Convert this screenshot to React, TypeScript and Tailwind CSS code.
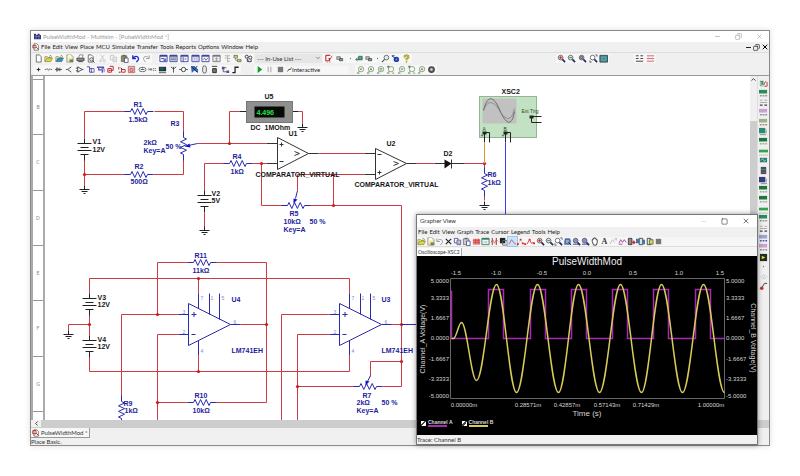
import React from 'react';
import { ChevronDown, ChevronLeft, ChevronUp, Copy, Minus, Square, X } from 'lucide-react';

type Draw = React.ReactNode;

const line = (d: string, color = '#333', width = 1) => (
  <path d={d} stroke={color} strokeWidth={width} fill="none" />
);
const fill = (d: string, color: string) => <path d={d} fill={color} />;

const panel = (frame: string, inner: Draw = null) => (
  <>
    <path d="M1 1.5h8v7H1z" fill="#f4f4fb" stroke={frame} />
    {fill('M1 1h8v2H1z', frame)}
    {inner}
  </>
);
const lens = (tint: string, inner: Draw = null) => (
  <>
    <circle cx="4" cy="4" r="2.6" fill={tint} stroke="#555" strokeWidth=".9" />
    {line('M6 6l3 3', '#23235f', 1.7)}
    {inner}
  </>
);
const probe = (inner: Draw = null) => (
  <>
    <circle cx="5.6" cy="4.6" r="3" fill="#f3f8ef" stroke="#7f9a76" strokeWidth=".9" />
    {line('M3.6 7L1.5 9M1 9h3', '#6d8a66', 0.9)}
    {inner}
  </>
);
const folder = (color: string) => (
  <>
    <path d="M1 8.5V3h3l1 1h3v1" fill="#fff3b0" stroke="#77702a" strokeWidth=".7" />
    <path d="M1 8.5l2-4h6.5l-2 4z" fill={color} stroke="#5a5a2a" strokeWidth=".5" />
    {line('M6 2.4q1.5-1.5 2.6.4', '#333', 0.7)}
  </>
);
const clipboard = (color: string) => (
  <>
    <path d="M1.5 2h6v6.5h-6z" fill={color} stroke="#555" strokeWidth=".7" />
    <path d="M5 4.5h4v5H5z" fill="#fff" stroke="#33337a" strokeWidth=".8" />
    {line('M3 1.5h3', '#555', 1.2)}
  </>
);
const pages = (color: string) => (
  <>
    <path d="M1.5 1.5h4v5h-4z" fill="#f4f4fa" stroke={color} strokeWidth=".8" />
    <path d="M4.5 3.5h4v5h-4z" fill="#f4f4fa" stroke={color} strokeWidth=".8" />
    {line('M5.5 5.5h2M5.5 7h2', color, 0.6)}
  </>
);
const sheet = (
  <path d="M2.5 1h3.5l2 2v6H2.5z" fill="#fff" stroke="#444" strokeWidth=".8" />
);
const meter = (color: string, detail: string) => (
  <>
    {fill('M0 1h9v4H0z', color)}
    {line('M1 7.5h2M4 7.5h2M7 7.5h2', detail, 1.4)}
  </>
);

const icons: Record<string, Draw> = {
  new: sheet,
  open: folder('#dcd83e'),
  sample: folder('#2b8ed8'),
  save: (
    <>
      <path d="M2 1h5l2 2v6H2z" fill="#f3f0ad" stroke="#777" strokeWidth=".7" />
      {fill('M3.5 1h3v2.5h-3z', '#fff')}
      {fill('M5 6h4v3H5z', '#7e7e5e')}
    </>
  ),
  print: (
    <>
      <path d="M3 4l1-3h4l-1 3" fill="#fff" stroke="#555" strokeWidth=".7" />
      <path d="M1 4.5h8v3H1z" fill="#8a8a8a" stroke="#3b3b3b" strokeWidth=".8" />
      {line('M2.5 8.5h5', '#3b3b3b', 1)}
    </>
  ),
  preview: (
    <>
      {sheet}
      <circle cx="6" cy="6" r="1.9" fill="#dce6e6" stroke="#444" strokeWidth=".8" />
      {line('M7.5 7.5l2 2', '#444', 1)}
    </>
  ),
  cut: (
    <>
      {line('M3 1l3.5 5M7 1L3.5 6', '#bbb', 0.8)}
      <circle cx="3" cy="7.5" r="1.2" fill="none" stroke="#bbb" strokeWidth=".8" />
      <circle cx="7" cy="7.5" r="1.2" fill="none" stroke="#bbb" strokeWidth=".8" />
    </>
  ),
  copyOff: pages('#bbb'),
  copy: pages('#33337a'),
  paste: clipboard('#8d8d4a'),
  pasteOff: clipboard('#c9c9c9'),
  undo: line('M2 1.5v3.5h3.5M2.5 4.5C5 1 9.5 3 8 6.5L6 9', '#1d2bd0', 1.5),
  undoOff: line('M2 1.5v3.5h3.5M2.5 4.5C5 1 9.5 3 8 6.5L6 9', '#999', 1),
  redoOff: line('M8 1.5v3.5H4.5M7.5 4.5C5 1 .5 3 2 6.5L4 9', '#999', 1),
  toolbox: panel('#3a4196', <>{line('M2.5 5h3', '#3a4196')}{fill('M5 5h3v3H5z', '#5574d0')}</>),
  spread: panel('#3e4a8e', line('M2 4.5h6M2 6.5h6', '#3e4a8e')),
  netlist: panel('#3f47a0', <>{line('M3.5 3.5v5', '#3f47a0')}{line('M5 5.5h2', '#c03030')}</>),
  grid: panel('#3f47a0', line('M2 4.5h6M2 6.5h6M4 3v5M6.5 3v5', '#9aa0d0', 0.6)),
  scope: panel('#3f47a0', line('M2 6.5l2-2 1.5 2.5L8 4', '#555', 0.8)),
  post: panel('#777', line('M3 5h4M3 7h4M5 3.5v5', '#999', 0.8)),
  tree: line('M2 2h6M5 2v7M5 5h3M5 8h3M2 4.5h2', '#aaa', 1),
  wizard: (
    <>
      {fill('M1 1h4v3H1zM5 6h4v3H5z', '#c9c858')}
      {line('M1 1.5h4v3H1zM5 6h4v2.5H5zM3 4.5V7h2', '#4a6652', 0.7)}
    </>
  ),
  database: (
    <>
      <circle cx="3" cy="3" r="1.7" fill="none" stroke="#333" strokeWidth="1" />
      <circle cx="7" cy="4" r="1.7" fill="none" stroke="#333" strokeWidth="1" />
      {line('M4 5v3.5h4V6', '#333', 1)}
      {fill('M3 6h2v2H3z', '#4658b8')}
    </>
  ),
  erc: (
    <>
      {line('M2 1.5h5M2 1.5v6h4v-3', '#c13b3b', 1.3)}
      {line('M5 5l1.5 1.5L9 2', '#8a2430', 0.8)}
      {line('M3 9h1M6 9h1', '#c13b3b', 1)}
    </>
  ),
  chip: (
    <>
      <path d="M2 3h4v3H2z" fill="#bfc6c4" stroke="#5d6865" strokeWidth=".8" />
      <path d="M5 5h3.5v2.5H5z" fill="#83a397" stroke="#38443f" strokeWidth=".8" />
    </>
  ),
  chipGreen: (
    <>
      <path d="M4 2.5h4v4H4z" fill="#5b9d82" stroke="#2d574c" strokeWidth=".8" />
      {line('M1 6h4M3 4L1 6l2 2', '#216a5e', 1)}
    </>
  ),
  dot: <circle cx="5" cy="5" r=".7" fill="#777" />,
  find: (
    <>
      <circle cx="6" cy="4" r="2.6" fill="#e3f0e9" stroke="#4a5b5b" strokeWidth=".9" />
      {line('M4 6L1 9', '#4a5b5b', 1.4)}
    </>
  ),
  edu: (
    <>
      <circle cx="6" cy="6" r="3" fill="#1f3fa8" />
      {line('M1 2l5 4M1 2h3', '#1a2a7a', 1)}
      {fill('M5 5h2v2H5z', '#4e9ad8')}
    </>
  ),
  help: (
    <>
      {line('M3 4V2.5Q5 .5 7 2.5V4L5 5.5V7', '#7b7b10', 2)}
      {line('M3 4V2.5Q5 .5 7 2.5V4L5 5.5V7', '#e8d531', 1)}
      <circle cx="5" cy="8.7" r="1" fill="#b39d1a" />
    </>
  ),
  zoomIn: lens('#f3caca', line('M2.5 4h3M4 2.5v3', '#c02020', 0.9)),
  zoomOut: lens('#d5ecdf', line('M2.5 4h3', '#27734f', 0.9)),
  zoomArea: lens('#b7b7cb', line('M3 3h2v2H3z', '#444', 0.7)),
  zoomFit: (
    <>
      {lens('#fff')}
      {line('M1 9.5V7M1 9h2M9 1v2M7 1h2', '#444', 0.8)}
    </>
  ),
  full: (
    <>
      <path d="M1 1.5h8.5v7.5H1z" fill="#3e8f8d" stroke="#345" strokeWidth="1" />
      {line('M3 3.5h4.5v3.5H3z', '#6fb3ae', 0.8)}
    </>
  ),
  rowsDark: line('M1 2h3M6 2h3M1 5h3M6 5h3M1 8h8', '#333', 1),
  rowsRed: (
    <>
      {line('M1 2h8M1 5h8M1 8h8', '#d35c6c', 1)}
      {line('M2.5 1v8M7 1v8', '#e9a6af', 0.6)}
    </>
  ),
  source: line('M3 5h4M5 3v4', '#333', 1.2),
  basic: line('M1 5h1.5l1-1 1.5 2 1.5-2 1 1H9', '#444', 0.8),
  diode: line('M1 5h8M3 3v4l3-2zM6.5 3v4', '#444', 0.9),
  transistor: line('M3 5l4-3M3 5l4 3M1 5h2', '#333', 0.9),
  analog: line('M3 2v6l5-3zM1 3.5h2M1 6.5h2M8 5h1.5', '#333', 0.9),
  ttl: (
    <>
      {line('M1 2h3v2h3M4 4v4h3', '#4044a0', 1)}
      {line('M6 4h3v4H6z', '#4044a0', 0.8)}
    </>
  ),
  cmos: (
    <>
      {line('M1 2.5h8M3 2.5v3h4v3', '#5a50b8', 1.4)}
      {line('M6 4h3v4', '#4044a0', 0.8)}
    </>
  ),
  misc: (
    <>
      {line('M2 8V4h4v4zM6 6h2V1.5H4', '#c62b35', 1.1)}
      {line('M3 6h2', '#c62b35', 1.4)}
    </>
  ),
  mixed: (
    <>
      {line('M2 2v3M5 4v4h4V5H5', '#c33', 1.1)}
      {line('M2 8h2M4 3l2 2', '#333', 1.1)}
    </>
  ),
  display: (
    <>
      <path d="M1.5 1.5h7v7h-7z" fill="#e9b8b8" stroke="#a25656" strokeWidth=".8" />
      {line('M3.5 4h3v3h-3z', '#b33', 0.7)}
    </>
  ),
  power: (
    <>
      <ellipse cx="5" cy="5" rx="4" ry="2.5" fill="none" stroke="#555" strokeWidth=".9" />
      {line('M3 5h4M5 3v1', '#555', 1)}
    </>
  ),
  miscText: line('M1 6V4l1 1 1-1v2M4 4v2M5.5 4H7M5.5 6H7M8 4h1M8 6h1', '#555', 0.9),
  peripheral: (
    <>
      {fill('M1 2h8v5H1z', '#1a3a3c')}
      {line('M1 8.5h8', '#555', 1)}
      {fill('M2 3h5v2H2z', '#246060')}
    </>
  ),
  rf: line('M2 2l3 2.5L8 2M5 2v6.5', '#333', 0.9),
  motor: (
    <>
      {line('M0 5h10', '#444', 0.9)}
      <circle cx="5" cy="5" r="2.4" fill="#fff" stroke="#333" strokeWidth="1" />
    </>
  ),
  ni: (
    <>
      {fill('M1 1h4l4 4v4L5 6 2 9z', '#3867b6')}
      {line('M2 2l6 6M8 1L5 5', '#192a67', 1)}
    </>
  ),
  connector: (
    <rect x="3" y="1" width="4" height="8" rx="2" fill="#eee" stroke="#555" strokeWidth="1" />
  ),
  mcu: (
    <>
      {line('M2 1.5h6', '#333', 1)}
      <path d="M3 4h4v4.5H3z" fill="#777" stroke="#222" strokeWidth="1" />
    </>
  ),
  hierarchy: (
    <>
      {fill('M1 2h3v3H1zM6 6h3v3H6z', '#4a50a8')}
      {line('M2.5 5v2.5H6M4 3h2', '#333', 0.8)}
    </>
  ),
  bus: line('M1.5 8.5h3v-6h4', '#222', 1.4),
  play: fill('M3 1l5 4-5 4z', '#0d9a22'),
  pause: line('M3.5 2v6M6.5 2v6', '#aaa', 1.2),
  stop: fill('M2 2h6v6H2z', '#777'),
  probeV: probe(line('M4.5 3.5l1 2 1-2', '#4e7d45', 0.8)),
  probeA: probe(line('M4.5 6l1-2.5 1 2.5', '#4e7d45', 0.8)),
  probeW: probe(line('M4 4h3M4 5.5h3', '#4e7d45', 0.8)),
  probePair: (
    <>
      {probe()}
      {line('M1 2h3M2.5 .5v3M7 9h2', '#3f7d3a', 0.9)}
    </>
  ),
  gear: (
    <>
      <circle cx="5" cy="5" r="3" fill="#777" stroke="#444" strokeWidth="1.5" />
      {fill('M4 4h2v2H4z', '#f0f0f0')}
    </>
  ),
  cross: line('M2 2l6 6M8 2L2 8', '#222', 1.3),
  redGrid: (
    <>
      {fill('M1 2h8v6.5H1z', '#e7817f')}
      {line('M1 4h8M1 6h8M4 2v6M7 2v6', '#c9423f', 0.7)}
    </>
  ),
  legend: panel('#397b68', fill('M3 4.5h4v2.5H3z', '#b9d9cf')),
  cursors: (
    <>
      {line('M2.5 1v8M7 1v8', '#a93a2f', 1.1)}
      {line('M1 6l2-3 2 4 2-4 2 2', '#b55', 0.8)}
    </>
  ),
  black: (
    <>
      {fill('M1 1h6v6H1z', '#222')}
      {line('M4 4h5v5H4z', '#666', 1)}
    </>
  ),
  waveA: line('M1 8l3-5 3 4 2 1', '#c55779', 1),
  waveB: (
    <>
      {line('M1 8l3-5 2 4 3 1', '#e5a3a3', 0.6)}
      {fill('M0 7h2v2H0zM3 2h2v2H3zM5.5 6h2v2h-2zM8 7h2v2H8z', '#d22')}
    </>
  ),
  waveC: (
    <>
      {line('M1 8l3-5 2 4 3-1', '#d33', 1)}
      {fill('M3 2h2v2H3zM8 6h2v2H8z', '#d22')}
    </>
  ),
  zoomX: (
    <>
      {fill('M2 1h6v2h1v6H1V4h1z', '#8dadc0')}
      {line('M2.5 2.5h5v5h-5z', '#3d4f9d', 1)}
      {line('M6 6l3 3', '#222', 1)}
    </>
  ),
  zoomY: (
    <>
      {lens('#8791d0')}
      {line('M1 8h8', '#343a7c', 1)}
    </>
  ),
  hand: (
    <path
      d="M2.5 5V3h1V1.5h1.2V1h1.2v1H7v1h1v3.5L7 9H4z"
      fill="#fff"
      stroke="#222"
      strokeWidth=".9"
    />
  ),
  annotOff: line('M1 8l3-5 2 3M6 2h3M8 1v3', '#bbb', 1),
  overlay: line('M1 7l2-4 2 3 2-3 2 3M1 8h4', '#a34aa3', 1),
  exportRed: (
    <>
      <path d="M1.5 1.5h4v7h-4z" fill="#8b8b8b" stroke="#333" strokeWidth=".9" />
      {line('M5 6h4M7 4l2 2-2 2', '#d02a2a', 1.2)}
    </>
  ),
  exportBlue: (
    <>
      <path d="M3.5 1.5h4v7h-4z" fill="#d9e4ef" stroke="#333" strokeWidth=".9" />
      {fill('M0 2h4v5H0zM7 3h3v5H7z', '#45779d')}
    </>
  ),
  exportGreen: (
    <>
      <path d="M2.5 1.5h4v7h-4z" fill="#d9e4ef" stroke="#333" strokeWidth=".9" />
      {fill('M5 3h4v5H5z', '#d8d840')}
      {line('M5 3h4v5H5z', '#555', 0.8)}
    </>
  ),
  multimeter: (
    <>
      {fill('M1 2h4v6H1z', '#4e9070')}
      {line('M2 3v4h3', '#fff', 0.7)}
      {line('M5.5 6.5Q7 1 9 4v4H6', '#b33838', 1)}
    </>
  ),
  funcGen: meter('#2c8c56', '#8a9a90'),
  watt: (
    <>
      {line('M1 2.5h3M6 2.5h3M1 5h8', '#9a8d8d', 0.8)}
      {line('M1 8h3M6 8h3', '#444', 1.4)}
    </>
  ),
  violet: meter('#c9a3cf', '#9c80a8'),
  olive: meter('#9bb286', '#b08a66'),
  teal: (
    <>
      {fill('M0 1h7v6H0z', '#2a8b72')}
      {line('M8 3v4M1 8.5h7', '#7a8f88', 1)}
    </>
  ),
  green: meter('#22753a', '#8fb59a'),
  lime: (
    <>
      {fill('M0 3h10v3H0z', '#36a24c')}
      {line('M0 9h10', '#aaa', 0.7)}
    </>
  ),
  scopeTeal: (
    <>
      {fill('M1 2h8v5H1z', '#2b7d6b')}
      {line('M2 5l2-2 2 3 2-2', '#cfe', 0.7)}
    </>
  ),
  bode: (
    <>
      {fill('M2 1h6v8H2z', '#424f66')}
      {line('M2 4h6', '#3aa06e', 1)}
      {line('M2 7h6', '#b64a56', 1)}
    </>
  ),
  navy: (
    <>
      {fill('M0 1h7v6H0z', '#353d7a')}
      {line('M2 8.5h7M8 3v4', '#7b80a8', 1)}
    </>
  ),
  blueText: meter('#9aa3cf', '#5158b0'),
  labview: (
    <>
      {fill('M1 1h8v8H1z', '#20301c')}
      {fill('M3 3l4 2-4 2z', '#d7d33a')}
    </>
  ),
  clipOff: line('M2 6l3-3q2 0 1 2L4 7q3 2 5-3', '#c8c8c8', 1),
  clamp: (
    <>
      {line('M9 1.5H6L3.5 6', '#333', 1)}
      <circle cx="3" cy="7" r="2" fill="#c23a2a" />
    </>
  ),
};

const ToolButton: React.FC<{ name: string; active?: boolean }> = ({ name, active }) => (
  <button
    type="button"
    aria-label={name}
    className={active ? 'bg-[#cce4f7] outline-1 outline-[#9cc8ec]' : 'hover:bg-[#dcebf8]'}
  >
    <svg viewBox="0 0 10 10" className="block size-[9px]">
      {icons[name]}
    </svg>
  </button>
);

const Tools: React.FC<{ names: string[]; className: string }> = ({ names, className }) => (
  <div className={`flex shrink-0 items-center justify-around bg-[#f7f7f7] ${className}`}>
    {names.map((name, i) => (
      <ToolButton key={name + i} name={name} />
    ))}
  </div>
);

const MenuBar: React.FC<{ items: string[] }> = ({ items }) => (
  <nav className="flex items-center gap-[2px]">
    {items.map((item) => (
      <button key={item} type="button" className="text-[#222]">
        {item}
      </button>
    ))}
  </nav>
);

/* ---------- schematic ---------- */

const BLUE = '#2a2aae';

const Resistor: React.FC<{ x: number; y: number; vertical?: boolean }> = ({ x, y, vertical }) => (
  <path
    d="M-6 0H0l1.5-3 2.8 6 2.8-6 2.8 6 2.8-6 2.8 6L17 0h6"
    transform={`translate(${x} ${y})${vertical ? ' rotate(90)' : ''}`}
    fill="none"
    stroke={BLUE}
  />
);

const Battery: React.FC<{ x: number; y: number }> = ({ x, y }) => (
  <path
    d="M0-5V0M-7 0H7M-4 4H4M-7 7H7M-4 11H4M0 11v6"
    transform={`translate(${x} ${y})`}
    stroke="#222"
    fill="none"
  />
);

const Ground: React.FC<{ x: number; y: number }> = ({ x, y }) => (
  <path
    d="M0-4V0M-5 0H5M-3 2H3M-1 4H1"
    transform={`translate(${x} ${y})`}
    stroke="#222"
    fill="none"
  />
);

const OpAmp: React.FC<{ x: number; y: number }> = ({ x, y }) => (
  <g transform={`translate(${x} ${y})`} stroke={BLUE} fill="none">
    <path d="M0-21V21L42 0zM-10-10H0M-10 10H0M10-31V-16M21-31V-10M31-31V-5M10 16V31M42 0H52" />
    <path d="M3-10H8M5.5-12.5V-7.5M3 10H7" />
    <g fill="#8585c8" stroke="none" className="text-[5px]">
      <text x="-6" y="-11">3</text>
      <text x="-6" y="9">2</text>
      <text x="12" y="-25">7</text>
      <text x="22" y="-25">1</text>
      <text x="33" y="-25">5</text>
      <text x="12" y="28">4</text>
      <text x="45" y="-1">6</text>
    </g>
  </g>
);

const wires = [
  'M84 138V111H125M154 111H183V132M183 159V174H153M125 174H84M84 158V185',
  'M197 143H266M229 143V111H239M298 111H302V123',
  'M204 190V163H224M252 163H266M261 163V205H282M309 205H401V386H382',
  'M333 205V174M297 190V174H364M318 153H364',
  'M416 163H434M464 163H484V168M484 195V200',
  'M89 293V278H349V293M89 325V335M89 357V371H349V355M198 278V293M198 355V371',
  'M68 330V324H89M89 314V325M157 314V262H187M215 262H266V402H215M187 402H157',
  'M178 314H121V396M178 334H157V420M240 324H266',
  'M329 314H281V420M329 334H297V420M297 386H354M390 324H401M401 361H370V376',
];

const joints = [
  [84, 174], [229, 143], [261, 163], [333, 205], [484, 163], [89, 324], [198, 278], [198, 371],
  [157, 314], [157, 402], [266, 324], [297, 386], [401, 324], [401, 361],
];

const blueLabels: [number, number, string][] = [
  [133, 106, 'R1'], [128, 121, '1.5kΩ'], [170, 125, 'R3'], [143, 144, '2kΩ'],
  [143, 152, 'Key=A'], [165, 148, '50 %'], [134, 168, 'R2'], [130, 183, '500Ω'],
  [232, 158, 'R4'], [230, 173, '1kΩ'], [289, 215, 'R5'], [283, 223, '10kΩ'],
  [309, 223, '50 %'], [283, 231, 'Key=A'], [487, 176, 'R6'], [487, 184, '1kΩ'],
  [194, 257, 'R11'], [192, 272, '11kΩ'], [231, 301, 'U4'], [231, 352, 'LM741EH'],
  [194, 397, 'R10'], [192, 412, '10kΩ'], [123, 405, 'R9'], [124, 412, '1kΩ'],
  [381, 301, 'U3'], [381, 352, 'LM741EH'], [362, 397, 'R7'], [356, 404, '2kΩ'],
  [381, 404, '50 %'], [356, 412, 'Key=A'],
];

const blackLabels: [number, number, string][] = [
  [92, 143, 'V1'], [92, 151, '12V'], [211, 195, 'V2'], [211, 202, '5V'], [264, 98, 'U5'],
  [250, 129, 'DC\u00a0 1MOhm'], [288, 135, 'U1'], [255, 176, 'COMPARATOR_VIRTUAL'],
  [386, 145, 'U2'], [354, 186, 'COMPARATOR_VIRTUAL'], [443, 155, 'D2'], [501, 93, 'XSC2'],
  [97, 299, 'V3'], [97, 306, '12V'], [97, 341, 'V4'], [97, 348, '12V'],
];

const Schematic: React.FC = () => (
  <svg
    viewBox="45 76 705 344"
    width="705"
    height="344"
    className="block max-w-none font-['Liberation_Sans',sans-serif]"
  >
    <g transform="translate(.5 .5)">
      <path d={wires.join('')} fill="none" stroke="#cc3a42" />
      {joints.map(([x, y]) => (
        <circle key={`${x}-${y}`} cx={x} cy={y} r="1.6" fill="#d01820" />
      ))}

      <Resistor x={130} y={111} />
      <Resistor x={130} y={174} />
      <Resistor x={183} y={137} vertical />
      <Resistor x={229} y={163} />
      <Resistor x={287} y={205} />
      <Resistor x={484} y={173} vertical />
      <Resistor x={193} y={262} />
      <Resistor x={193} y={402} />
      <Resistor x={121} y={401} vertical />
      <Resistor x={359} y={386} />

      <Battery x={84} y={143} />
      <Battery x={204} y={195} />
      <Battery x={89} y={298} />
      <Battery x={89} y={340} />
      <path d="M204 212V230" stroke="#cc3a42" />
      <Ground x={84} y={189} />
      <Ground x={204} y={230} />
      <Ground x={302} y={127} />
      <Ground x={484} y={205} />
      <Ground x={68} y={334} />

      {/* potentiometer wipers */}
      <path d="M197 143L188 145M297 190L295 198M370 375L367 381M401 324H416" stroke={BLUE} fill="none" />
      <path d="M184 146l5-3 1 4zM293 203v-5l4 1zM365 385v-5l4 1z" fill="#1414c8" />

      {/* comparators */}
      <g fill="none" stroke="#333">
        <path d="M277 137V169L308 153zM266 143H277M266 163H277M308 153H318" />
        <path d="M375 148V179L406 163zM364 153H375M364 174H375M406 163H416" />
        <path d="M279 144h4M281 142v4M279 161h4M377 154h4M377 172h4M379 170v4" />
        <path d="M294 151l5 2-5 2M393 161l5 2-5 2" />
        <path d="M434 163H464M451 159V168" />
      </g>
      <path d="M444 159V168L451 163z" fill="#111" />

      <OpAmp x={188} y={324} />
      <OpAmp x={339} y={324} />

      {/* voltmeter readout */}
      <path d="M239 111H246M292 111H298" stroke="#222" />
      <rect x="246" y="101" width="46" height="21" fill="#8f8f8f" stroke="#777" />
      <rect x="254" y="106" width="30" height="11" fill="#050a05" />
      <text x="256" y="114" fill="#2fe04a" className="text-[7px] font-bold">4.496</text>

      {/* oscilloscope */}
      <rect x="479" y="96" width="57" height="41" fill="#c3e2c3" stroke="#95b595" />
      <rect x="482" y="98" width="34" height="25" fill="#c1c1c1" />
      <path d="M483 110C487 94 493 95 499 109S511 128 514 111" fill="none" stroke="#555" strokeWidth=".8" />
      <path d="M483 110C487 99 493 100 499 110S511 122 514 108" fill="none" stroke="#777" strokeWidth=".7" />
      <path d="M484 132V142M484 132H489V142M505 132V142M505 132H510V142M531 116H541M531 116V122H541" fill="none" stroke="#222" />
      <path d="M482 131h4v3h-4zM503 131h4v3h-4zM529 115h4v3h-4z" fill="#222" />
      <g fill="#244a2a" className="text-[5px]">
        <text x="482" y="130">A</text>
        <text x="503" y="130">B</text>
        <text x="521" y="112">Ext Trig</text>
        <text x="480" y="136">+</text>
        <text x="501" y="136">+</text>
      </g>
      <path d="M484 142V163" stroke="#e0962e" />
      <path d="M505 142V230" stroke="#3c3cf0" />

      <g fill="#1d1d9c" className="text-[7px] font-bold">
        {blueLabels.map(([x, y, label]) => (
          <text key={`${x}-${y}`} x={x} y={y}>{label}</text>
        ))}
      </g>
      <g fill="#161616" className="text-[7px] font-bold">
        {blackLabels.map(([x, y, label]) => (
          <text key={`${x}-${y}`} x={x} y={y}>{label}</text>
        ))}
      </g>
    </g>
  </svg>
);

/* ---------- oscilloscope graph ---------- */

const extrema: [number, number][] = [
  [451, 338], [453, 338], [461, 322], [476, 380], [496, 284], [516, 392], [537, 284], [558, 392],
  [578, 284], [599, 392], [620, 284], [641, 392], [661, 284], [682, 392], [703, 284], [724, 392],
];

const sinePath = extrema
  .map(([x, y], i) => {
    if (i === 0) return `M${x} ${y}`;
    const [px, py] = extrema[i - 1];
    const k = (x - px) * 0.364;
    return `C${px + k} ${py} ${x - k} ${y} ${x} ${y}`;
  })
  .join('');

const pulsePath =
  'M451 290V338' +
  [488, 530, 571, 612, 653, 695].map((x) => `H${x}V289H${x + 15}V338`).join('') +
  'H724';

const yTicks: [string, number][] = [
  ['5.0000', 283], ['3.3333', 300], ['1.6667', 320], ['0.0000', 340], ['-1.6667', 361],
  ['-3.3333', 381], ['-5.0000', 398],
];
const topTicks: [string, number][] = [
  ['-1.5', 456], ['-1.0', 496], ['-0.5', 542], ['0.0', 587], ['0.5', 633], ['1.0', 679],
  ['1.5', 720],
];
const bottomTicks: [string, number][] = [
  ['0.00000m', 464], ['0.28571m', 528], ['0.42857m', 567], ['0.57143m', 607],
  ['0.71429m', 646], ['1.00000m', 711],
];

const Graph: React.FC = () => (
  <svg
    viewBox="417 256 340 162"
    className="block w-full fill-[#d4d4d4] font-['Liberation_Sans',sans-serif] text-[6px]"
  >
    <text x="587" y="265" textAnchor="middle" className="fill-[#eee] text-[10px]">PulseWidthMod</text>
    {topTicks.map(([label, x]) => (
      <text key={label} x={x} y="275" textAnchor="middle">{label}</text>
    ))}
    {bottomTicks.map(([label, x]) => (
      <text key={label} x={x} y="407" textAnchor="middle">{label}</text>
    ))}
    {yTicks.map(([label, y]) => (
      <React.Fragment key={label}>
        <text x="449" y={y} textAnchor="end">{label}</text>
        <text x="726" y={y}>{label}</text>
      </React.Fragment>
    ))}
    <text x="587" y="416" textAnchor="middle" className="text-[8px]">Time (s)</text>
    <text transform="translate(425 339) rotate(-90)" textAnchor="middle" className="text-[7px]">
      Channel_A Voltage(V)
    </text>
    <text transform="translate(751 338) rotate(90)" textAnchor="middle" className="text-[7px]">
      Channel_B Voltage(V)
    </text>
    <g fill="none" transform="translate(.5 .5)">
      <path d="M450 278H724V398H450z" stroke="#666" />
      <path d={pulsePath} stroke="#a62ab6" strokeWidth="1.5" />
      <path d={sinePath} stroke="#d8cc58" strokeWidth="1.5" />
    </g>
  </svg>
);

const LegendEntry: React.FC<{ id: string; label: string; bar: string }> = ({ id, label, bar }) => (
  <div className="flex items-center gap-[2px]">
    <input
      id={id}
      type="checkbox"
      defaultChecked
      className="size-[5px] appearance-none bg-white checked:bg-[linear-gradient(135deg,#fff_35%,#444_35%,#444_60%,#fff_60%)]"
    />
    <label htmlFor={id} className="text-[5px] leading-[5px] font-bold text-[#ddd]">
      {label}
      <span className={`block h-[2px] w-[19px] ${bar}`} />
    </label>
  </div>
);

const graphTools = [
  'open', 'save', 'undoOff', 'cross', 'copy', 'pasteOff', '|', 'redGrid', 'legend', 'cursors',
  'black', 'waveA', 'waveB', 'waveC', '|', 'zoomIn', 'zoomOut', 'zoomFit', 'zoomX', 'zoomY',
  'zoomY', 'hand', '|',
];

const GrapherWindow: React.FC = () => (
  <section className="absolute right-[11px] bottom-0 w-[342px] border border-[#777] bg-[#f0f0f0] shadow-[0_0_5px_#0006]">
    <header className="flex h-[12px] items-center justify-between bg-white pr-[7px] pl-[3px]">
      <h2>Grapher View</h2>
      <div className="flex gap-[14px]">
        <button type="button" aria-label="Minimize"><Minus className="size-[7px] text-[#ccc]" /></button>
        <button type="button" aria-label="Maximize"><Square className="size-[7px]" /></button>
        <button type="button" aria-label="Close"><X className="size-[8px]" /></button>
      </div>
    </header>
    <div className="flex h-[10px] items-center pl-px">
      <MenuBar
        items={['File', 'Edit', 'View', 'Graph', 'Trace', 'Cursor', 'Legend', 'Tools', 'Help']}
      />
    </div>
    <div className="flex h-[10px] items-center border-b border-[#ddd] bg-[#f6f6f6]">
      {graphTools.map((name, i) =>
        name === '|' ? (
          <span key={i} className="w-px" />
        ) : (
          <ToolButton key={i} name={name} active={name === 'waveA'} />
        ),
      )}
      <button type="button" className="w-[9px] font-['Liberation_Serif',serif] text-[8px] font-bold">A</button>
      {['annotOff', 'overlay', 'exportRed', 'exportBlue', 'exportGreen', 'stop'].map((name) => (
        <ToolButton key={name} name={name} />
      ))}
    </div>
    <div className="flex h-[9px] items-end bg-[#f4f4f4]">
      <button type="button" className="h-[8px] border-r border-[#aaa] bg-white px-px text-[5px] leading-[8px]">
        Oscilloscope-XSC2
      </button>
    </div>
    <div className="bg-black pb-[8px] font-['Liberation_Sans',sans-serif]">
      <Graph />
      <div className="flex gap-[9px] pt-[2px] pl-[4px]">
        <LegendEntry id="ch-a" label="Channel A" bar="bg-[#a62ab6]" />
        <LegendEntry id="ch-b" label="Channel B" bar="bg-[#d8cc58]" />
      </div>
    </div>
    <footer className="flex h-[9px] items-center">Trace: Channel B</footer>
  </section>
);

/* ---------- main window ---------- */

const instruments = [
  'multimeter', 'funcGen', 'watt', 'violet', 'olive', 'teal', 'green', 'lime', 'scopeTeal', 'bode',
  'navy', 'green', 'green', 'lime', 'funcGen', 'watt', 'blueText', 'violet', 'labview', 'dot',
  'clipOff', 'clamp',
];

const App: React.FC = () => {
  return (
    <div className="min-h-screen bg-white p-[30px] font-[Lato,sans-serif] text-[6px] leading-[8px] text-[#333]">
      <main className="relative border border-[#8a8a8a] bg-[#f0f0f0] shadow-[0_0_6px_#0002]">
        <header className="flex h-[11px] items-center bg-white pr-[6px] pl-[3px] text-[#999]">
          <svg viewBox="0 0 10 10" className="mr-[2px] size-[7px]">
            {fill('M0 1h3v2h2V1h3v2h2v6H0z', '#34347c')}
            {line('M1 5h8M3 3v6M7 3v6', '#8d8dd0', 0.8)}
          </svg>
          <h1 className="flex-1">PulseWidthMod - Multisim - [PulseWidthMod *]</h1>
          <div className="flex gap-[14px]">
            <button type="button" aria-label="Minimize"><Minus className="size-[7px]" /></button>
            <button type="button" aria-label="Restore"><Copy className="size-[7px] -scale-x-100" /></button>
            <button type="button" aria-label="Close"><X className="size-[7px]" /></button>
          </div>
        </header>

        <div className="flex h-[11px] items-center border-b border-[#dedede] pl-px">
          <svg viewBox="0 0 10 10" className="mr-px size-[8px]">
            {sheet}
            {line('M1 3h4v3H1zM5 5l3 3', '#a03030', 1)}
          </svg>
          <MenuBar
            items={[
              'File', 'Edit', 'View', 'Place', 'MCU', 'Simulate', 'Transfer', 'Tools', 'Reports',
              'Options', 'Window', 'Help',
            ]}
          />
          <div className="ml-auto flex gap-px text-black">
            <button type="button" aria-label="Minimize document"><Minus className="size-[7px]" strokeWidth={3} /></button>
            <button type="button" aria-label="Restore document"><Copy className="size-[7px] -scale-x-100" /></button>
            <button type="button" aria-label="Close document"><X className="size-[8px]" strokeWidth={3} /></button>
          </div>
        </div>

        <div className="flex h-[11px] items-center gap-px pl-[2px]">
          <Tools names={['new', 'open', 'sample', 'save', 'print', 'preview']} className="w-[63px]" />
          <Tools names={['cut', 'copyOff', 'paste', 'undo', 'redoOff']} className="w-[55px]" />
          <Tools
            names={['toolbox', 'spread', 'netlist', 'grid', 'scope', 'post', 'tree', 'wizard', 'database']}
            className="ml-[5px] w-[96px]"
          />
          <div className="relative">
            <select
              aria-label="In-use list"
              className="block h-[9px] w-[67px] appearance-none bg-[#e6e6e6] pl-[2px] text-[6px] leading-[9px]"
            >
              <option>--- In-Use List ---</option>
            </select>
            <ChevronDown className="pointer-events-none absolute top-px right-px size-[6px]" />
          </div>
          <Tools names={['erc', 'chip']} className="w-[22px]" />
          <Tools names={['dot', 'chipGreen', 'chip', 'dot']} className="w-[33px]" />
          <Tools names={['find', 'edu', 'help']} className="w-[32px]" />
          <Tools
            names={['zoomIn', 'zoomOut', 'zoomArea', 'zoomFit', 'full']}
            className="ml-[143px] w-[53px]"
          />
          <Tools names={['rowsDark', 'rowsRed']} className="ml-[24px] w-[22px]" />
        </div>

        <div className="flex h-[11px] items-center gap-px pl-[2px]">
          <Tools
            names={[
              'source', 'basic', 'diode', 'transistor', 'analog', 'ttl', 'cmos', 'misc', 'mixed',
              'display', 'power', 'miscText', 'peripheral', 'rf', 'motor', 'ni', 'connector', 'mcu',
              'hierarchy', 'bus',
            ]}
            className="w-[208px]"
          />
          <Tools names={['play', 'pause', 'stop']} className="ml-[12px] w-[32px]" />
          <button type="button" className="flex w-[62px] items-center bg-[#f7f7f7] text-[#222]">
            <svg viewBox="0 0 10 10" className="size-[5px]">{line('M1 9l3-5 2 2 3-5', '#333', 1.5)}</svg>
            Interactive
          </button>
          <Tools
            names={['probeV', 'probeA', 'probeW', 'probePair', 'probeV', 'probePair', 'probeA', 'gear']}
            className="ml-[5px] w-[82px]"
          />
        </div>

        <div className="flex border-t border-[#999]">
          <div className="w-[14px] shrink-0 border-x-2 border-[#aaa] bg-white pt-[3px]">
            <div className="grid h-[332px] grid-rows-6 text-center text-[5px] text-[#888]">
              {['B', 'C', 'D', 'E', 'F', 'G'].map((letter) => (
                <span key={letter} className="flex items-center justify-center border-t border-[#999]">
                  {letter}
                </span>
              ))}
            </div>
            <div className="border-t border-[#999]" />
          </div>
          <div className="min-w-0 flex-1 overflow-hidden bg-white">
            <Schematic />
          </div>
          <div className="flex w-[7px] flex-col items-center bg-[#f0f0f0]">
            <button type="button" aria-label="Scroll up"><ChevronUp className="size-[7px]" strokeWidth={3} /></button>
            <div className="mt-[38px] w-full flex-1 bg-[#cdcdcd]" />
          </div>
          <div className="w-[12px] border-l border-[#ddd] pt-[3px]">
            <div className="flex h-[212px] flex-col items-center justify-between">
              {instruments.map((name, i) => (
                <ToolButton key={i} name={name} />
              ))}
            </div>
          </div>
        </div>

        <div className="flex h-[7px] items-center bg-[#cdcdcd]">
          <button type="button" aria-label="Scroll left" className="w-[10px] bg-[#f0f0f0]">
            <ChevronLeft className="mx-auto size-[7px]" strokeWidth={3} />
          </button>
        </div>
        <div className="flex h-[11px] items-start border-t border-[#ccc]">
          <button type="button" className="flex h-[10px] items-center gap-px border-r border-b border-[#999] bg-[#f7f7f7] px-px">
            <svg viewBox="0 0 10 10" className="size-[8px]">
              {sheet}
              {line('M1 2h4v4H1zM5 5l3 3', '#b03030', 1.2)}
            </svg>
            PulseWidthMod *
          </button>
        </div>
        <footer className="h-[7px] leading-[7px]">Place Basic.</footer>

        <GrapherWindow />
      </main>
    </div>
  );
};

export default App;
